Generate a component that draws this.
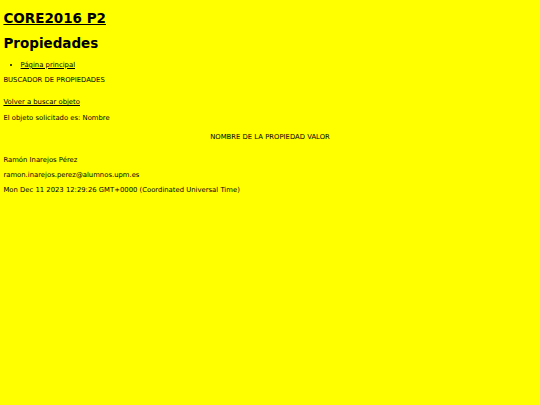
export default function App() {
    return (
        <div className="min-h-screen bg-[#ffff00] px-[3.4px] pt-[9.8px] font-['DejaVu_Sans',sans-serif] text-black">
            <h1 className="text-[13.5px] leading-[16px] font-bold"><a href="#" className="underline">CORE2016 P2</a></h1>
            <h1 className="mt-[9.2px] text-[13.5px] leading-[16px] font-bold">Propiedades</h1>
            <ul className="mt-[9.8px] list-disc pl-[17.2px] text-[6.85px] leading-[8px]">
                <li><a href="#" className="underline">Página principal</a></li>
            </ul>
            <p className="mt-[7.3px] text-[6.85px] leading-[8px]">BUSCADOR DE PROPIEDADES</p>
            <p className="mt-[14.4px] text-[6.85px] leading-[8px]"><a href="#" className="underline">Volver a buscar objeto</a></p>
            <p className="mt-[7.8px] text-[6.85px] leading-[8px]">El objeto solicitado es: Nombre</p>
            <div className="mt-[11.2px] w-full text-center text-[6.85px] leading-[8px]">NOMBRE DE LA PROPIEDAD VALOR</div>
            <p className="mt-[14.8px] text-[6.85px] leading-[8px]">Ramón Inarejos Pérez</p>
            <p className="mt-[6.8px] text-[6.85px] leading-[8px]">ramon.inarejos.perez@alumnos.upm.es</p>
            <p className="mt-[6.6px] text-[6.85px] leading-[8px]">Mon Dec 11 2023 12:29:26 GMT+0000 (Coordinated Universal Time)</p>
        </div>
    )
}
